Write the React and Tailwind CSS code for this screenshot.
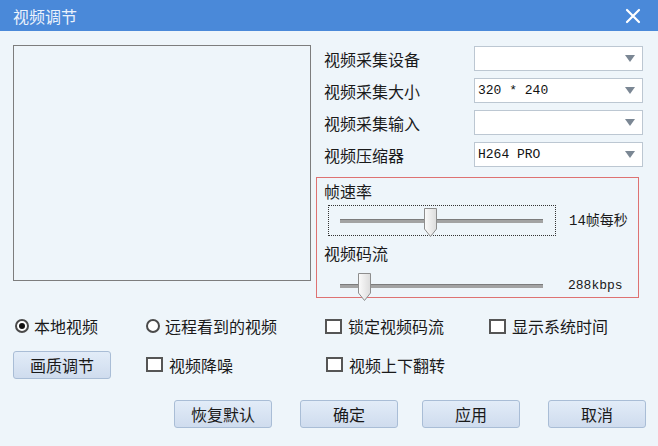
import React from "react";

const cjk = { fontFamily: '"Noto Sans CJK SC", "Noto Sans", sans-serif' };
const mono = { fontFamily: '"Liberation Mono", "Noto Sans CJK SC", monospace' };

function Combo({ value }) {
  return (
    <div className="w-[169px] h-[25px] bg-white border border-[#bcc7d2] flex items-center justify-between pl-[3px] pr-[7px]">
      <span className="text-[13px] text-[#111] leading-none" style={mono}>
        {value}
      </span>
      <svg width="10" height="7" viewBox="0 0 10 7">
        <path d="M0 0 H10 L5 7 Z" fill="#7b8794" />
      </svg>
    </div>
  );
}

function Thumb({ h }) {
  return (
    <svg width="13" height={h} viewBox={`0 0 13 ${h}`}>
      <defs>
        <linearGradient id="tg" x1="0" x2="1" y1="0" y2="0">
          <stop offset="0" stopColor="#fbfbfb" />
          <stop offset="1" stopColor="#dcdcdc" />
        </linearGradient>
      </defs>
      <path
        d={`M0.5 0.5 H12.5 V${h - 8} L6.5 ${h - 0.5} L0.5 ${h - 8} Z`}
        fill="url(#tg)"
        stroke="#8e8e8e"
      />
    </svg>
  );
}

function Track({ thumbLeft, h }) {
  return (
    <div className="relative w-[203px] h-[4px] bg-[#a3a3a3] border-t border-[#7c7c7c]">
      <div className="absolute top-[-12px]" style={{ left: thumbLeft }}>
        <Thumb h={h} />
      </div>
    </div>
  );
}

function Radio({ checked, label, className }) {
  return (
    <div className={"flex items-center " + (className || "")}>
      <div className="w-[14px] h-[14px] rounded-full border-2 border-[#4a4a4a] bg-white flex items-center justify-center">
        {checked && <div className="w-[6px] h-[6px] rounded-full bg-[#111]" />}
      </div>
      <span className="ml-[5px] text-[16px] text-[#1a1a1a] leading-[20px]">{label}</span>
    </div>
  );
}

function Check({ label, className }) {
  return (
    <div className={"flex items-center " + (className || "")}>
      <div className="w-[17px] h-[15px] border-2 border-[#555] bg-white" />
      <span className="ml-[6px] text-[16px] text-[#1a1a1a] leading-[20px]">{label}</span>
    </div>
  );
}

function Btn({ children, className }) {
  return (
    <button
      className={
        "w-[98px] h-[28px] rounded-[3px] border border-[#a9bdd6] bg-gradient-to-b from-[#e2ecf8] to-[#cfdcee] text-[16px] text-[#1a1a1a] leading-none " +
        (className || "")
      }
    >
      {children}
    </button>
  );
}

export default function App() {
  return (
    <div className="w-[658px] h-[446px] bg-[#eef5fa] flex flex-col overflow-hidden" style={cjk}>
      <div className="h-[31px] bg-[#4a89d9] flex items-center justify-between pl-[13px] pr-[17px] shrink-0">
        <span className="text-[16px] text-[#eaf2fc] leading-none">视频调节</span>
        <svg width="16" height="16" viewBox="0 0 16 16">
          <path d="M2 2 L14 14 M14 2 L2 14" stroke="#ffffff" strokeWidth="2.2" strokeLinecap="round" />
        </svg>
      </div>

      <div className="pl-[13px] pt-[14px]">
        <div className="flex h-[253px]">
          <div className="w-[298px] h-[236px] border border-[#7d7d7d] bg-[#eef5fa]" />
          <div className="ml-[5px] flex flex-col">
            <div className="flex flex-col gap-[7px] mt-[1px]">
              {[
                ["视频采集设备", ""],
                ["视频采集大小", "320 * 240"],
                ["视频采集输入", ""],
                ["视频压缩器", "H264 PRO"],
              ].map(([label, value]) => (
                <div key={label} className="flex items-center h-[25px]">
                  <span className="w-[158px] pl-[8px] text-[16px] text-[#1a1a1a] leading-[20px]">{label}</span>
                  <Combo value={value} />
                </div>
              ))}
            </div>

            <div className="mt-[10px] w-[323px] h-[121px] border border-[#de7272] flex flex-col">
              <span className="pl-[7px] pt-[3px] text-[16px] text-[#1a1a1a] leading-[20px]">帧速率</span>
              <div className="flex items-center mt-[4px]">
                <div className="ml-[11px] w-[228px] h-[31px] border border-dotted border-[#333] flex items-center pl-[11px]">
                  <Track thumbLeft={84} h={29} />
                </div>
                <span className="ml-[13px] text-[14px] text-[#1a1a1a] leading-none" style={mono}>
                  14帧每秒
                </span>
              </div>
              <span className="pl-[7px] mt-[7px] text-[16px] text-[#1a1a1a] leading-[20px]">视频码流</span>
              <div className="flex items-center mt-[10px] h-[28px]">
                <div className="ml-[23px] mt-[2px]">
                  <Track thumbLeft={18} h={28} />
                </div>
                <span className="ml-[25px] text-[13px] text-[#1a1a1a] leading-none" style={mono}>
                  288kbps
                </span>
              </div>
            </div>
          </div>
        </div>

        <div className="flex items-center h-[20px] mt-[18px] pl-[2px]">
          <Radio checked label="本地视频" className="w-[131px]" />
          <Radio label="远程看到的视频" className="w-[179px]" />
          <Check label="锁定视频码流" className="w-[164px]" />
          <Check label="显示系统时间" />
        </div>

        <div className="flex items-center h-[27px] mt-[15px]">
          <Btn className="w-[97px] h-[27px]">画质调节</Btn>
          <Check label="视频降噪" className="ml-[35px] w-[180px]" />
          <Check label="视频上下翻转" />
        </div>

        <div className="flex mt-[22px] pl-[161px]">
          <Btn>恢复默认</Btn>
          <Btn className="ml-[28px]">确定</Btn>
          <Btn className="ml-[24px]">应用</Btn>
          <Btn className="ml-[28px]">取消</Btn>
        </div>
      </div>
    </div>
  );
}
